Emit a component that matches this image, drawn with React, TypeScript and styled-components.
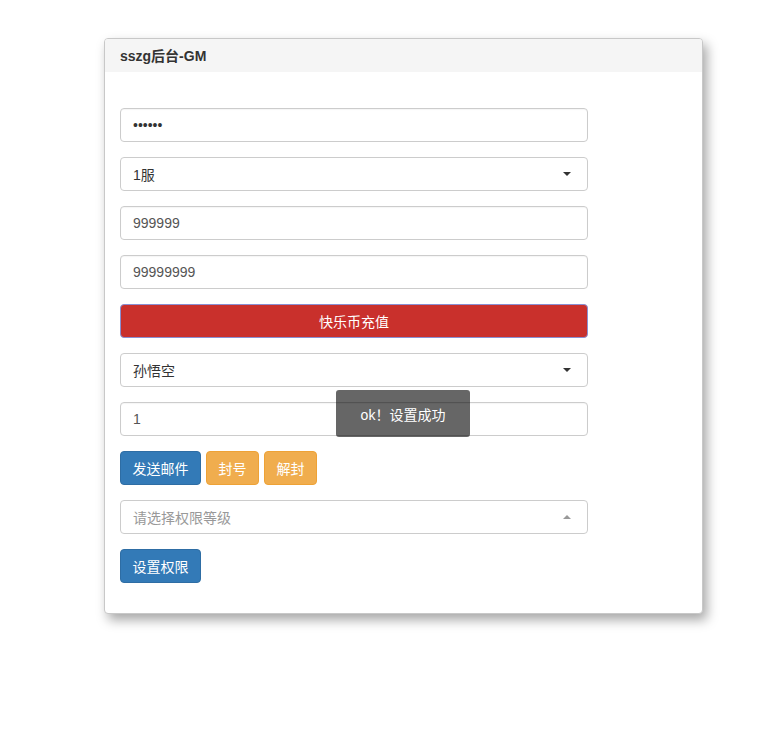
import { createGlobalStyle, styled } from "styled-components";

const GlobalStyle = createGlobalStyle`
    html, body {
        margin: 0;
        background: #fff;
        font-family: "Liberation Sans", "Noto Sans CJK SC", sans-serif;
        font-size: 14px;
        color: #333;
    }
`;

const App = () => {
    return (
        <Page>
            <GlobalStyle />
            <Panel>
                <PanelHeading>sszg后台-GM</PanelHeading>
                <PanelBody>
                    <Field>
                        <Input value="••••••" tone="dark" />
                    </Field>
                    <Field>
                        <Select>
                            <span>1服</span>
                            <Caret />
                        </Select>
                    </Field>
                    <Field>
                        <Input value="999999" />
                    </Field>
                    <Field>
                        <Input value="99999999" />
                    </Field>
                    <Field>
                        <BlockButton>快乐币充值</BlockButton>
                    </Field>
                    <Field>
                        <Select>
                            <span>孙悟空</span>
                            <Caret />
                        </Select>
                    </Field>
                    <Field>
                        <Input value="1" />
                    </Field>
                    <ButtonRow>
                        <Button variant="primary">发送邮件</Button>
                        <Button variant="warning">封号</Button>
                        <Button variant="warning">解封</Button>
                    </ButtonRow>
                    <Field>
                        <Select placeholder>
                            <span>请选择权限等级</span>
                            <Caret up />
                        </Select>
                    </Field>
                    <ButtonRow>
                        <Button variant="primary">设置权限</Button>
                    </ButtonRow>
                </PanelBody>
            </Panel>
            <Toast>ok！设置成功</Toast>
        </Page>
    );
};

const Input = ({ value, tone }: { value: string; tone?: string }) => (
    <InputBox tone={tone}>{value}</InputBox>
);

const Page = styled.div`
    min-height: 735px;
    padding: 38px 0 0 104px;
    box-sizing: border-box;
`;

const Panel = styled.div`
    width: 599px;
    background: #fff;
    border: 1px solid #c8c8c8;
    border-radius: 4px;
    box-shadow: 4px 6px 12px rgba(0, 0, 0, 0.35);
    box-sizing: border-box;
    overflow: hidden;
`;

const PanelHeading = styled.div`
    background: #f5f5f5;
    height: 33px;
    line-height: 34px;
    padding: 0 15px;
    font-weight: bold;
    font-size: 14px;
    color: #333;
`;

const PanelBody = styled.div`
    padding: 36px 15px 15px;
`;

const Field = styled.div`
    width: 468px;
    margin-bottom: 15px;
`;

const InputBox = styled.div<{ tone?: string }>`
    height: 34px;
    box-sizing: border-box;
    border: 1px solid #ccc;
    border-radius: 4px;
    padding: 0 12px;
    display: flex;
    align-items: center;
    color: ${({ tone }) => (tone === "dark" ? "#333" : "#555")};
    font-size: 14px;
    box-shadow: inset 0 1px 1px rgba(0, 0, 0, 0.04);
`;

const Select = styled.div<{ placeholder?: boolean }>`
    height: 34px;
    box-sizing: border-box;
    border: 1px solid #ccc;
    border-radius: 4px;
    padding: 0 12px;
    display: flex;
    align-items: center;
    justify-content: space-between;
    color: ${({ placeholder }) => (placeholder ? "#999" : "#333")};
    font-size: 14px;
`;

const Caret = styled.span<{ up?: boolean }>`
    width: 0;
    height: 0;
    margin-right: 4px;
    border-left: 4px solid transparent;
    border-right: 4px solid transparent;
    ${({ up }) =>
        up
            ? "border-bottom: 4px solid #999;"
            : "border-top: 4px solid #333;"}
`;

const BlockButton = styled.div`
    height: 34px;
    box-sizing: border-box;
    background: #c9302c;
    border: 1px solid #8a8fd2;
    border-radius: 4px;
    color: #fff;
    display: flex;
    align-items: center;
    justify-content: center;
    font-size: 14px;
`;

const ButtonRow = styled.div`
    display: flex;
    gap: 5px;
    margin-bottom: 15px;
`;

const Button = styled.div<{ variant: "primary" | "warning" }>`
    height: 34px;
    box-sizing: border-box;
    padding: 0 11.5px;
    border-radius: 4px;
    display: flex;
    align-items: center;
    color: #fff;
    font-size: 14px;
    background: ${({ variant }) => (variant === "primary" ? "#337ab7" : "#f0ad4e")};
    border: 1px solid ${({ variant }) => (variant === "primary" ? "#2e6da4" : "#eea236")};
`;

const Toast = styled.div`
    position: absolute;
    left: 336px;
    top: 390px;
    width: 134px;
    height: 47px;
    background: rgba(0, 0, 0, 0.6);
    border-radius: 3px;
    color: #fff;
    font-size: 14px;
    display: flex;
    align-items: center;
    justify-content: center;
`;

export default App;
